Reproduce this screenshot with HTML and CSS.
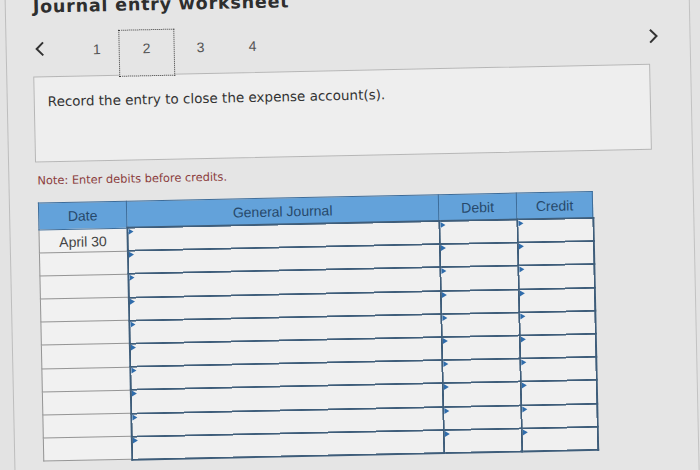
FILE: index.html
```html
<!DOCTYPE html>
<html lang="en">
<head>
<meta charset="utf-8">
<title>Journal entry worksheet</title>
<link rel="stylesheet" href="styles.css">
</head>
<body>
<div class="stage">
  <div class="frame">
    <h1 class="title">Journal entry worksheet</h1>
    <div class="tabs">
      <span class="chev chev-left"><svg width="10" height="15" viewBox="0 0 10 15"><polyline points="8.5,1 2,7.5 8.5,14" fill="none" stroke="#333" stroke-width="2"/></svg></span>
      <span class="tab">1</span>
      <span class="tab tab-active">2</span>
      <span class="tab">3</span>
      <span class="tab">4</span>
      <span class="chev chev-right"><svg width="10" height="15" viewBox="0 0 10 15"><polyline points="1.5,1 8,7.5 1.5,14" fill="none" stroke="#333" stroke-width="2"/></svg></span>
    </div>
    <div class="question"><p>Record the entry to close the expense account(s).</p></div>
    <p class="note">Note: Enter debits before credits.</p>
    <table class="journal">
      <colgroup>
        <col class="c-date"><col class="c-gj"><col class="c-debit"><col class="c-credit">
      </colgroup>
      <thead>
        <tr><th>Date</th><th>General Journal</th><th>Debit</th><th>Credit</th></tr>
      </thead>
      <tbody>
        <tr><td class="date">April 30</td><td class="entry"></td><td class="entry"></td><td class="entry"></td></tr>
        <tr><td class="date"></td><td class="entry"></td><td class="entry"></td><td class="entry"></td></tr>
        <tr><td class="date"></td><td class="entry"></td><td class="entry"></td><td class="entry"></td></tr>
        <tr><td class="date"></td><td class="entry"></td><td class="entry"></td><td class="entry"></td></tr>
        <tr><td class="date"></td><td class="entry"></td><td class="entry"></td><td class="entry"></td></tr>
        <tr><td class="date"></td><td class="entry"></td><td class="entry"></td><td class="entry"></td></tr>
        <tr><td class="date"></td><td class="entry"></td><td class="entry"></td><td class="entry"></td></tr>
        <tr><td class="date"></td><td class="entry"></td><td class="entry"></td><td class="entry"></td></tr>
        <tr><td class="date"></td><td class="entry"></td><td class="entry"></td><td class="entry"></td></tr>
        <tr><td class="date"></td><td class="entry"></td><td class="entry"></td><td class="entry"></td></tr>
      </tbody>
    </table>
  </div>
</div>
</body>
</html>
```
FILE: styles.css
```css
html, body {
  margin: 0;
  padding: 0;
}
body {
  width: 700px;
  height: 470px;
  overflow: hidden;
  background: #e3e3e3;
}
.stage {
  width: 700px;
  height: 470px;
  transform: rotate(-1.2deg);
  transform-origin: 350px 235px;
}
.frame {
  display: flow-root;
  box-sizing: border-box;
  margin: -30px 0 0 9px;
  padding-top: 30px;
  width: 685px;
  height: 560px;
  background: #e5e5e5;
  border-left: 1px solid #bdbdbd;
  border-right: 1px solid #c2c2c2;
}
.title {
  margin: -10px 0 0 27px;
  font: bold 17.5px/20px "DejaVu Sans", Verdana, sans-serif;
  letter-spacing: 0.8px;
  color: #2e2e2e;
}
.tabs {
  display: flex;
  align-items: flex-start;
  height: 45px;
  margin-top: 15px;
}
.chev {
  display: block;
  margin-top: 10px;
  height: 15px;
}
.chev svg {
  display: block;
}
.chev-left {
  margin-left: 28px;
  margin-right: 26px;
}
.chev-right {
  margin-left: auto;
  margin-right: 31px;
}
.tab {
  box-sizing: border-box;
  width: 52px;
  height: 45px;
  padding-top: 12px;
  text-align: center;
  font: 14px/15px "Liberation Sans", Arial, sans-serif;
  color: #555;
}
.tab-active {
  position: relative;
  z-index: 1;
  width: 56px;
  height: 47px;
  margin-left: -4px;
  padding-top: 11px;
  border: 1px dotted #3c3c3c;
  background: #e5e5e5;
}
.question {
  box-sizing: border-box;
  width: 617px;
  height: 86px;
  margin-left: 26px;
  padding: 16px 0 0 13px;
  border: 1px solid #b6b6b6;
  background: #eeeeee;
  font: 13.5px/16px "DejaVu Sans", Verdana, sans-serif;
  color: #333;
}
.question p {
  margin: 0;
}
.note {
  margin: 11px 0 0 28px;
  font: 11.4px/14px "DejaVu Sans", Verdana, sans-serif;
  color: #8b3d3d;
}
.journal {
  margin: 15px 0 0 28px;
  width: 554px;
  table-layout: fixed;
  border-collapse: collapse;
  font-family: "Liberation Sans", Arial, sans-serif;
  font-size: 14px;
}
.c-date { width: 88px; }
.c-gj { width: 312px; }
.c-debit { width: 78px; }
.c-credit { width: 76px; }
.journal th {
  height: 25px;
  padding: 0;
  background: #63a2da;
  color: #27496b;
  font-weight: normal;
  text-align: center;
  border: 1px solid #3d6c99;
}
.journal tbody tr {
  height: 23.2px;
}
.journal td {
  padding: 0;
}
.journal td.date {
  border: 1px solid #959595;
  background: #f1f1f1;
  color: #444;
  text-align: center;
  padding-top: 2px;
}
.journal td.entry {
  position: relative;
  border: 2px solid #3e5d7a;
  background: #f0f0f0;
}
.journal td.entry::before {
  content: "";
  position: absolute;
  left: 0;
  top: 0;
  border-left: 5px solid #2f6cab;
  border-top: 3px solid transparent;
  border-bottom: 3px solid transparent;
}
```
